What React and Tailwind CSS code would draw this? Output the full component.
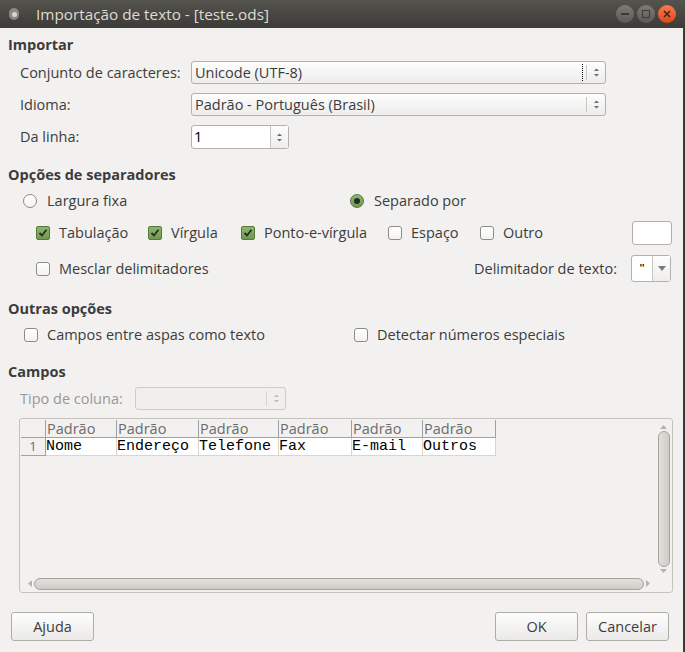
import React from 'react';

const font = { fontFamily: '"Open Sans", "Noto Sans", sans-serif' };

function Combo({ value, width, focus, disabled }) {
  return (
    <div
      className={`flex h-full items-center rounded-[3px] border ${disabled ? 'border-[#cfccc7] bg-[#f0efed]' : 'border-[#b4b1ab] bg-gradient-to-b from-[#fdfdfd] to-[#eeedec]'}`}
      style={{ width }}
    >
      <div className="flex h-full flex-1 items-center pl-[3px] text-[14.5px] text-[#3c3c3c]">{value}</div>
      {focus && <div className="mr-[3px] h-[17px] border-l border-dotted border-black" />}
      <div className={`flex h-[15px] w-[19px] flex-col items-center justify-center border-l ${disabled ? 'border-[#d8d5d0]' : 'border-[#c9c6c1]'}`}>
        <Arrows light={disabled} />
      </div>
    </div>
  );
}

function Arrows({ light }) {
  const c = light ? '#bdbab5' : '#6e6e6e';
  return (
    <svg width="7" height="11" viewBox="0 0 7 11">
      <path d="M1 4 L3.5 1.5 L6 4 Z" fill={c} />
      <path d="M1 7 L3.5 9.5 L6 7 Z" fill={c} />
    </svg>
  );
}

function Check({ checked }) {
  if (checked) {
    return (
      <div className="flex h-[14px] w-[14px] items-center justify-center rounded-[2px] border border-[#557a3c] bg-gradient-to-b from-[#8cb56e] to-[#6f9a52]">
        <svg width="10" height="10" viewBox="0 0 10 10">
          <path d="M1.5 5 L4 7.5 L8.5 1.8" stroke="#2a2a2a" strokeWidth="1.8" fill="none" />
        </svg>
      </div>
    );
  }
  return <div className="h-[14px] w-[14px] rounded-[3px] border border-[#8e8c88] bg-gradient-to-b from-white to-[#f4f3f2]" />;
}

function Radio({ checked }) {
  if (checked) {
    return (
      <div className="flex h-[14px] w-[14px] items-center justify-center rounded-full border border-[#557a3c] bg-gradient-to-b from-[#8cb56e] to-[#6f9a52]">
        <div className="h-[6px] w-[6px] rounded-full bg-[#2a2a2a]" />
      </div>
    );
  }
  return <div className="h-[14px] w-[14px] rounded-full border border-[#8e8c88] bg-gradient-to-b from-white to-[#f4f3f2]" />;
}

function CheckItem({ checked, label, className = '' }) {
  return (
    <div className={`flex items-center ${className}`}>
      <Check checked={checked} />
      <span className="ml-[9px] text-[14.5px] text-[#3c3c3c]">{label}</span>
    </div>
  );
}

function Button({ children, className = '' }) {
  return (
    <div className={`flex h-[29px] w-[83px] items-center justify-center rounded-[3px] border border-[#b0ada8] bg-gradient-to-b from-[#fdfdfd] to-[#ebeae8] text-[14.5px] text-[#3c3c3c] ${className}`}>
      {children}
    </div>
  );
}

const cols = [
  { w: 71, h: 'Padrão', v: 'Nome' },
  { w: 82, h: 'Padrão', v: 'Endereço' },
  { w: 80, h: 'Padrão', v: 'Telefone' },
  { w: 73, h: 'Padrão', v: 'Fax' },
  { w: 71, h: 'Padrão', v: 'E-mail' },
  { w: 73, h: 'Padrão', v: 'Outros' },
];

export default function App() {
  return (
    <div className="flex h-[652px] w-[685px] flex-col overflow-hidden bg-[#f2f1f0]" style={font}>
      {/* Title bar */}
      <div className="flex h-[28px] shrink-0 items-center bg-gradient-to-b from-[#55534e] to-[#3c3b37]">
        <div className="ml-[9px] flex h-[12px] w-[10px] items-center justify-center rounded-full bg-[#8a8883]">
          <div className="h-[5px] w-[5px] rounded-full bg-[#d8d6d0]" />
        </div>
        <span className="ml-[17px] text-[15.3px] text-[#dfdbd2]">Importação de texto - [teste.ods]</span>
        <div className="ml-auto mr-[9px] flex items-center gap-[3px]">
          <div className="flex h-[18px] w-[18px] items-center justify-center rounded-full bg-gradient-to-b from-[#7d7b76] to-[#5c5a55]">
            <div className="h-[2px] w-[8px] bg-[#3c3b37]" />
          </div>
          <div className="flex h-[18px] w-[18px] items-center justify-center rounded-full bg-gradient-to-b from-[#7d7b76] to-[#5c5a55]">
            <div className="h-[8px] w-[8px] border-[1.5px] border-[#3c3b37]" />
          </div>
          <div className="flex h-[18px] w-[18px] items-center justify-center rounded-full bg-gradient-to-b from-[#f47a4c] to-[#e0461c]">
            <svg width="8" height="8" viewBox="0 0 8 8">
              <path d="M1 1 L7 7 M7 1 L1 7" stroke="#3c2a20" strokeWidth="1.6" />
            </svg>
          </div>
        </div>
      </div>

      <div className="flex flex-1 flex-col border-r-2 border-[#3c3b37] pl-[8px]">
        {/* Importar */}
        <div className="mt-[7px] flex h-[20px] items-center text-[14.5px] font-bold text-[#3c3c3c]">Importar</div>
        <div className="mt-[6px] flex h-[23px] items-center">
          <span className="w-[183px] pl-[12px] text-[14.5px] text-[#3c3c3c]">Conjunto de caracteres:</span>
          <Combo value="Unicode (UTF-8)" width={415} focus />
        </div>
        <div className="mt-[9px] flex h-[23px] items-center">
          <span className="w-[183px] pl-[12px] text-[14.5px] text-[#3c3c3c]">Idioma:</span>
          <Combo value="Padrão - Português (Brasil)" width={415} />
        </div>
        <div className="mt-[9px] flex h-[24px] items-center">
          <span className="w-[183px] pl-[12px] text-[14.5px] text-[#3c3c3c]">Da linha:</span>
          <div className="flex h-full w-[98px] rounded-[3px] border border-[#b4b1ab] bg-white">
            <div className="flex flex-1 items-center pl-[2px] text-[14.5px] text-black">1</div>
            <div className="flex w-[18px] items-center justify-center border-l border-[#c9c6c1] bg-gradient-to-b from-[#fdfdfd] to-[#eeedec]">
              <Arrows />
            </div>
          </div>
        </div>

        {/* Opções de separadores */}
        <div className="mt-[16px] flex h-[20px] items-center text-[14.5px] font-bold text-[#3c3c3c]">Opções de separadores</div>
        <div className="mt-[6px] flex h-[20px] items-center">
          <div className="ml-[15px] flex w-[327px] items-center">
            <Radio />
            <span className="ml-[10px] text-[14.5px] text-[#3c3c3c]">Largura fixa</span>
          </div>
          <div className="flex items-center">
            <Radio checked />
            <span className="ml-[10px] text-[14.5px] text-[#3c3c3c]">Separado por</span>
          </div>
        </div>
        <div className="mt-[10px] flex h-[24px] items-center">
          <div className="ml-[28px] flex w-[112px]"><CheckItem checked label="Tabulação" /></div>
          <div className="flex w-[93px]"><CheckItem checked label="Vírgula" /></div>
          <div className="flex w-[147px]"><CheckItem checked label="Ponto-e-vírgula" /></div>
          <div className="flex w-[92px]"><CheckItem label="Espaço" /></div>
          <div className="flex w-[152px]"><CheckItem label="Outro" /></div>
          <div className="h-full w-[40px] rounded-[3px] border border-[#b4b1ab] bg-white" />
        </div>
        <div className="mt-[10px] flex h-[27px] items-center">
          <div className="ml-[28px] flex flex-1"><CheckItem label="Mesclar delimitadores" /></div>
          <span className="mr-[14px] text-[14.5px] text-[#3c3c3c]">Delimitador de texto:</span>
          <div className="mr-[12px] flex h-full w-[40px] rounded-[3px] border border-[#b4b1ab] bg-white">
            <div className="flex w-[20px] items-start justify-center pt-[3px] text-[13px] text-black" style={{ fontFamily: '"Liberation Sans", sans-serif' }}>"</div>
            <div className="flex flex-1 items-center justify-center border-l border-[#c9c6c1] bg-gradient-to-b from-[#fdfdfd] to-[#eeedec]">
              <svg width="8" height="5" viewBox="0 0 8 5"><path d="M0 0 L8 0 L4 5 Z" fill="#7a7a7a" /></svg>
            </div>
          </div>
        </div>

        {/* Outras opções */}
        <div className="mt-[17px] flex h-[20px] items-center text-[14.5px] font-bold text-[#3c3c3c]">Outras opções</div>
        <div className="mt-[6px] flex h-[20px] items-center">
          <div className="ml-[16px] flex w-[330px]"><CheckItem label="Campos entre aspas como texto" /></div>
          <CheckItem label="Detectar números especiais" />
        </div>

        {/* Campos */}
        <div className="mt-[17px] flex h-[20px] items-center text-[14.5px] font-bold text-[#3c3c3c]">Campos</div>
        <div className="mt-[5px] flex h-[23px] items-center">
          <span className="w-[127px] pl-[12px] text-[14.5px] text-[#9a9894]">Tipo de coluna:</span>
          <Combo value="" width={151} disabled />
        </div>

        {/* Preview table */}
        <div className="ml-[11px] mt-[8px] flex h-[175px] w-[654px] flex-col rounded-[3px] border border-[#c6c3be] p-[1px]">
          <div className="flex flex-1">
            <div className="flex flex-1 flex-col">
              <div className="flex h-[18px] text-[14.5px] leading-[17px] text-[#6b6b6b]">
                <div className="w-[25px] border-b border-r border-[#a3a19d] bg-[#f2f1f0]" />
                {cols.map((c, i) => (
                  <div key={i} className="border-b border-r border-[#a3a19d] bg-[#f2f1f0] pl-[1px]" style={{ width: c.w }}>{c.h}</div>
                ))}
              </div>
              <div className="flex h-[18px] text-[15px] leading-[17px]">
                <div className="flex w-[25px] items-end justify-center border-b border-r border-[#a3a19d] bg-[#f2f1f0] text-[13px] text-[#5a6b8c]">1</div>
                {cols.map((c, i) => (
                  <div key={i} className="border-b border-r border-[#d8d6d2] bg-white text-black" style={{ width: c.w, fontFamily: '"Liberation Mono", monospace' }}>{c.v}</div>
                ))}
              </div>
            </div>
            {/* vertical scrollbar */}
            <div className="flex w-[15px] flex-col items-center pt-[4px]">
              <svg width="7" height="5" viewBox="0 0 7 5"><path d="M0 5 L3.5 1 L7 5 Z" fill="#b5b3af" /></svg>
              <div className="mt-[2px] w-[12px] flex-1 rounded-[6px] border border-[#a6a39e] bg-gradient-to-r from-[#e2e0dc] to-[#cfccc7]" />
              <svg className="mt-[2px] mb-[2px]" width="7" height="5" viewBox="0 0 7 5"><path d="M0 0 L3.5 4 L7 0 Z" fill="#b5b3af" /></svg>
            </div>
          </div>
          {/* horizontal scrollbar */}
          <div className="flex h-[15px] items-center pr-[16px]">
            <svg className="ml-[6px] mr-[2px]" width="5" height="7" viewBox="0 0 5 7"><path d="M5 0 L1 3.5 L5 7 Z" fill="#b5b3af" /></svg>
            <div className="h-[12px] flex-1 rounded-[6px] border border-[#a6a39e] bg-gradient-to-b from-[#e2e0dc] to-[#cfccc7]" />
            <svg className="ml-[2px] mr-[4px]" width="5" height="7" viewBox="0 0 5 7"><path d="M0 0 L4 3.5 L0 7 Z" fill="#b5b3af" /></svg>
          </div>
        </div>

        {/* Buttons */}
        <div className="mt-[19px] flex items-center">
          <Button className="ml-[3px]">Ajuda</Button>
          <Button className="ml-auto">OK</Button>
          <Button className="ml-[8px] mr-[14px]">Cancelar</Button>
        </div>
      </div>
    </div>
  );
}
